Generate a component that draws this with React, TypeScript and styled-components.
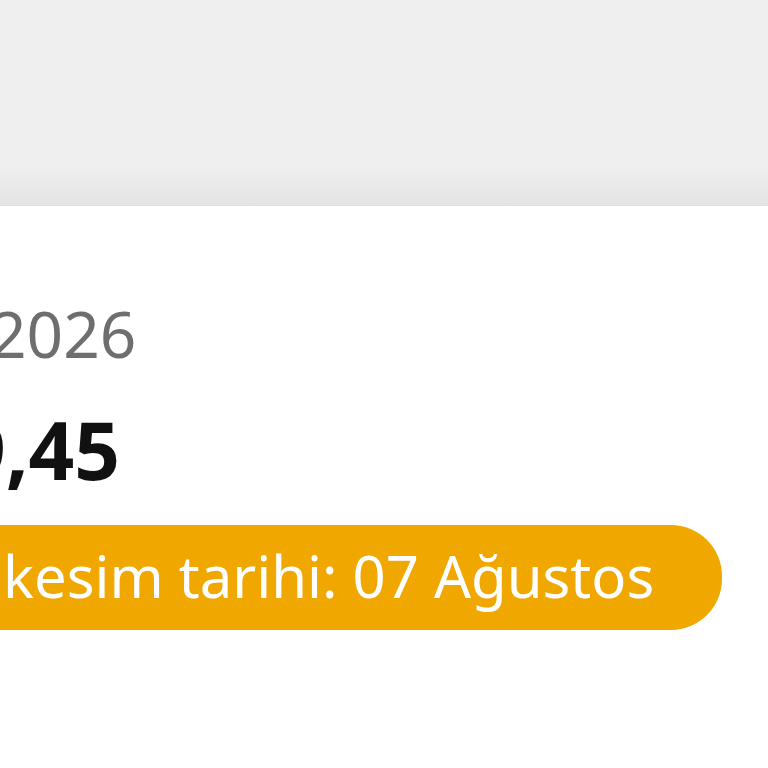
import styled, { createGlobalStyle } from 'styled-components';

const GlobalStyle = createGlobalStyle`
  html, body {
    margin: 0;
    padding: 0;
    background: #ffffff;
  }
  body {
    font-family: 'Noto Sans', 'Open Sans', sans-serif;
  }
`;

const Page = styled.div`
  width: 768px;
  height: 768px;
  overflow: hidden;
  display: flex;
  flex-direction: column;
  background: #ffffff;
`;

const TopBar = styled.div`
  height: 205px;
  flex-shrink: 0;
  background: linear-gradient(180deg, #efefef 0%, #efefef 80%, #e4e4e4 100%);
  border-bottom: 1px solid #e0e0e0;
`;

const Body = styled.div`
  display: flex;
  flex-direction: column;
  align-items: flex-start;
  padding-top: 88px;
`;

const Line = styled.div<{ $shift: number }>`
  margin-left: ${p => p.$shift}px;
  white-space: nowrap;
`;

const DateText = styled(Line)`
  font-size: 64px;
  line-height: 80px;
  color: #6e6e6e;
  font-weight: 400;
`;

const Amount = styled(Line)`
  margin-top: 27px;
  font-size: 80px;
  line-height: 96px;
  color: #111111;
  font-weight: 700;
`;

const Badge = styled(Line)`
  margin-top: 28px;
  height: 101px;
  display: flex;
  align-items: center;
  padding: 0 68px 4px 60px;
  background: #f0a800;
  border-radius: 0 51px 51px 0;
  color: #ffffff;
  font-size: 58px;
`;

export default function App() {
  return (
    <Page>
      <GlobalStyle />
      <TopBar />
      <Body>
        <DateText $shift={-10}>2026</DateText>
        <Amount $shift={-40}>9,45</Amount>
        <Badge $shift={-57}>kesim tarihi: 07 Ağustos</Badge>
      </Body>
    </Page>
  );
}
